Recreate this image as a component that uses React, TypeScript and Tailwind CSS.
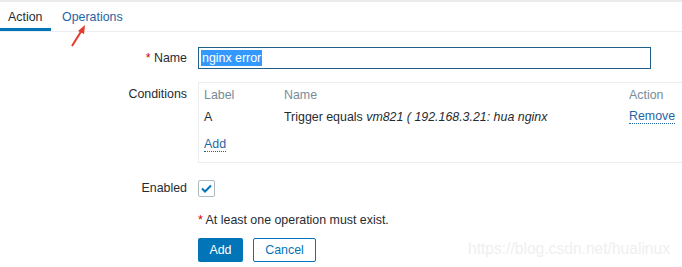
const App = () => {
  return (
    <div className="w-[682px] h-[267px] bg-white border-t-2 border-[#e9ebec] overflow-hidden relative font-['Liberation_Sans',Arial,sans-serif] text-[12.4px] text-[#1f2c33]">
      {/* tabs */}
      <div className="flex h-[30px] border-b border-[#ebeef0]">
        <div className="w-[51px] pl-[8px] pt-[6px] border-b-[3px] border-[#0275b8]">Action</div>
        <div className="pl-[11px] pt-[6px] text-[#1f65a6]">Operations</div>
      </div>
      <svg className="absolute left-[68px] top-[20px]" width="22" height="28" viewBox="0 0 22 28">
        <path d="M4 24 L14 8" stroke="#e33b2e" strokeWidth="2" />
        <path d="M17 3 L10 9 L16 12 Z" fill="#e33b2e" />
      </svg>

      <div className="flex flex-col mt-[15px]">
        {/* name */}
        <div className="flex items-center h-[22px]">
          <div className="w-[187px] text-right">
            <span className="text-[#d40000]">*</span> Name
          </div>
          <div className="ml-[11px] w-[453px] h-[22px] border border-[#1f6089] flex items-center pl-[2px]">
            <span className="bg-[#3399ff] text-white leading-[16px] px-[1px]">nginx error</span>
          </div>
        </div>

        {/* conditions */}
        <div className="flex mt-[13px]">
          <div className="w-[187px] text-right pt-[3px]">Conditions</div>
          <div className="ml-[11px] flex-1 -mr-[10px] h-[81px] border border-[#ebeef0] pl-[5px]">
            <div className="flex h-[24px] items-center pt-[1px] text-[#768d99]">
              <div className="w-[80px]">Label</div>
              <div className="w-[345px]">Name</div>
              <div>Action</div>
            </div>
            <div className="flex h-[20px] items-center">
              <div className="w-[80px]">A</div>
              <div className="w-[345px]">
                Trigger equals <i>vm821 ( 192.168.3.21: hua nginx</i>
              </div>
              <div className="text-[#1f65a6] border-b border-dotted border-[#1f65a6] leading-[13px]">Remove</div>
            </div>
            <div className="mt-[10px] flex">
              <span className="text-[#1f65a6] border-b border-dotted border-[#1f65a6] leading-[14px]">Add</span>
            </div>
          </div>
        </div>

        {/* enabled */}
        <div className="flex items-center mt-[16px] h-[18px]">
          <div className="w-[187px] text-right">Enabled</div>
          <div className="ml-[11px] w-[17px] h-[17px] border border-[#acbbc2] rounded-[2px] flex items-center justify-center">
            <svg width="11" height="9" viewBox="0 0 11 9">
              <path d="M1 4.5 L4 7.5 L10 1.5" stroke="#0275b8" strokeWidth="2" fill="none" />
            </svg>
          </div>
        </div>

        {/* message */}
        <div className="ml-[198px] mt-[14px] h-[16px]">
          <span className="text-[#d40000]">*</span> At least one operation must exist.
        </div>

        {/* buttons */}
        <div className="flex ml-[198px] mt-[11px] gap-[10px]">
          <button className="w-[45px] h-[24px] bg-[#0275b8] text-white rounded-[2px]">Add</button>
          <button className="w-[63px] h-[24px] border border-[#0275b8] text-[#0275b8] rounded-[2px] bg-white">Cancel</button>
        </div>
      </div>

      <div className="absolute left-[468px] top-[235px] text-[15.6px] text-[#efefef] font-['Liberation_Sans',Arial,sans-serif]">
        https://blog.csdn.net/hualinux
      </div>
    </div>
  );
};

export default App;
